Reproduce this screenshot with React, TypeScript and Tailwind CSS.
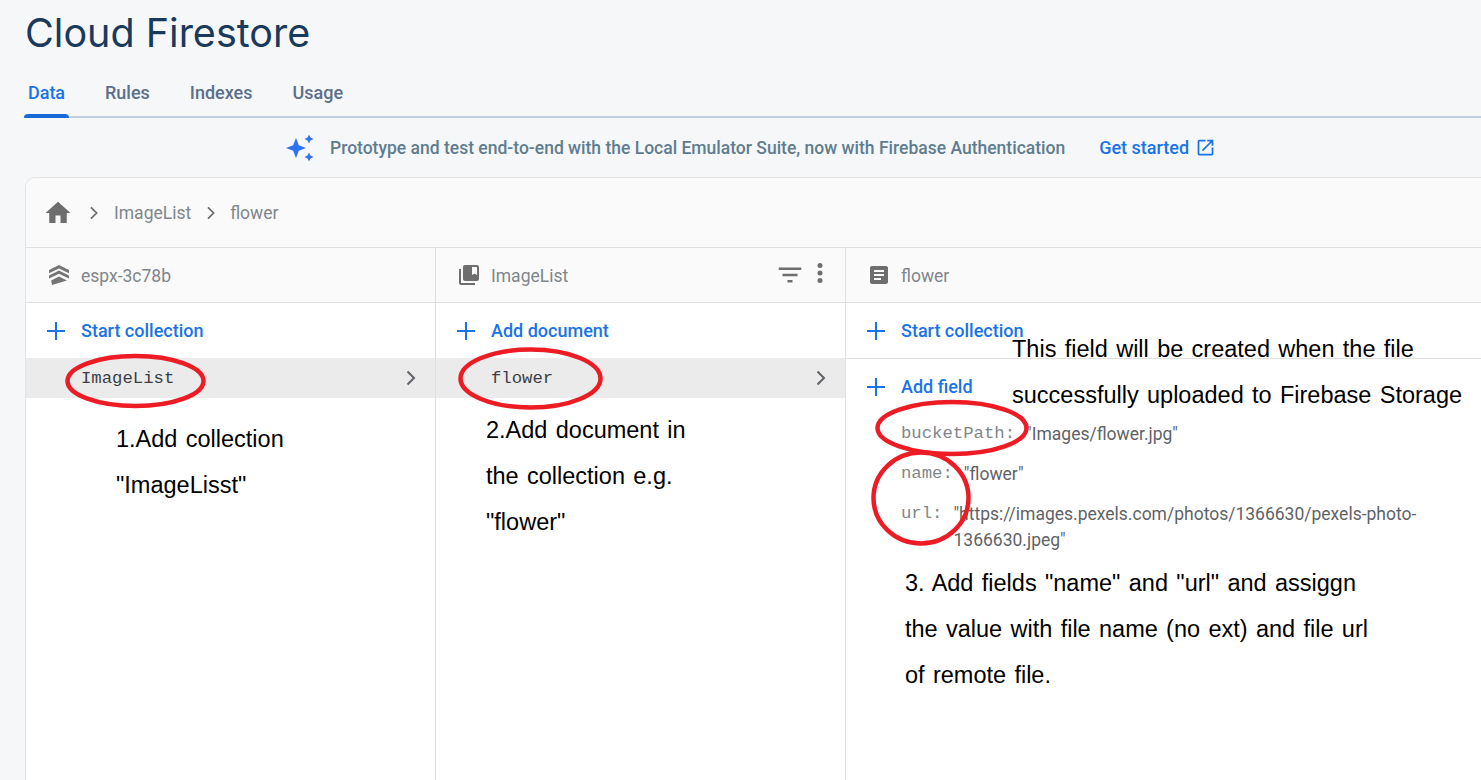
const sans = "font-['Roboto',sans-serif]";

function Plus() {
  return (
    <svg viewBox="0 0 18 18" className="w-[18px] h-[18px] shrink-0 text-[#1a73e8]" fill="currentColor">
      <path d="M8 0h2v8h8v2h-8v8H8v-8H0V8h8z" />
    </svg>
  );
}

function Chevron({ className }: { className: string }) {
  return (
    <svg viewBox="0 0 10 16" className={className} fill="none" stroke="currentColor" strokeWidth="2">
      <path d="M1.500 1.500 8 8l-6.500 6.500" />
    </svg>
  );
}

function ActionRow({ label, border }: { label: string; border?: boolean }) {
  return (
    <div className={`flex items-center h-[55px] pl-[21px] gap-[16px] ${border ? "border-b border-[#e0e0e0] h-[56px]" : ""}`}>
      <Plus />
      <span className="text-[18px] font-medium text-[#1a73e8]">{label}</span>
    </div>
  );
}

function SelectedRow({ label }: { label: string }) {
  return (
    <div className="flex items-center justify-between h-[40px] pl-[55px] pr-[19px] bg-[#ebebeb]">
      <span className="pt-[2px] font-['Liberation_Mono',monospace] text-[17.300px] text-[#3c4043]">{label}</span>
      <Chevron className="w-[10px] h-[16px] text-[#5f6368]" />
    </div>
  );
}

function Field({ name, value, wrap }: { name: string; value: string; wrap?: boolean }) {
  return (
    <div className={`flex pl-[55px] gap-[11px] text-[17.500px] leading-[26px] ${wrap ? "pr-[50px]" : ""}`}>
      <span className="font-['Liberation_Mono',monospace] text-[17.300px] text-[#80868b] shrink-0">{name}</span>
      <span className="text-[#5f6368]">{value}</span>
    </div>
  );
}

function ColumnHeader({ icon, label, children }: { icon: React.ReactNode; label: string; children?: React.ReactNode }) {
  return (
    <div className="flex items-center h-[55px] pl-[21px] pr-[10px] bg-[#fafafa] border-b border-[#e0e0e0]">
      <div className="w-[24px] flex justify-center shrink-0">{icon}</div>
      <span className="ml-[10px] pt-[2px] text-[17.500px] text-[#80868b]">{label}</span>
      {children}
    </div>
  );
}

function Note({ className, lines }: { className: string; lines: string[] }) {
  return (
    <div className={`absolute font-['Liberation_Sans',sans-serif] text-[23.500px] leading-[46px] [word-spacing:1.800px] text-black whitespace-nowrap ${className}`}>
      {lines.map((l) => (
        <div key={l}>{l}</div>
      ))}
    </div>
  );
}

export default function App() {
  return (
    <div className={`relative w-[1481px] h-[780px] overflow-hidden bg-[#f6f7f9] ${sans}`}>
      <h1 className="pl-[25px] pt-[9px] h-[74px] font-['Inter',sans-serif] text-[39.500px] leading-[48px] text-[#1a3a5c]">
        Cloud Firestore
      </h1>

      {/* tabs */}
      <div className="flex ml-[24px] h-[44px] border-b-[2px] border-[#c2cfe0] text-[18px] font-medium text-[#5c6f8a]">
        <div className="relative w-[45px] text-center text-[#1a73e8] pt-[5px]">
          Data
          <div className="absolute left-0 right-0 bottom-[-2px] h-[4px] rounded-t-[4px] bg-[#1a67d8]" />
        </div>
        <div className="ml-[36px] pt-[5px]">Rules</div>
        <div className="ml-[40px] pt-[5px]">Indexes</div>
        <div className="ml-[40px] pt-[5px]">Usage</div>
      </div>

      {/* banner */}
      <div className="flex items-center h-[59px] pl-[285px] text-[17.500px] font-medium">
        <svg viewBox="0 0 30 30" className="w-[30px] h-[30px] text-[#2b73f0]" fill="currentColor">
          <path d="M11 5 13.800 12.200 21 15 13.800 17.800 11 25 8.200 17.800 1 15 8.200 12.200z" />
          <path d="M24 1.500 25.400 4.600 28.500 6 25.400 7.400 24 10.500 22.600 7.400 19.500 6 22.600 4.600z" />
          <path d="M24 19.500 25.400 22.600 28.500 24 25.400 25.400 24 28.500 22.600 25.400 19.500 24 22.600 22.600z" />
        </svg>
        <span className="ml-[15px] pt-[2px] text-[#5f7d8f]">
          Prototype and test end-to-end with the Local Emulator Suite, now with Firebase Authentication
        </span>
        <span className="ml-[34px] text-[18px] text-[#1a73e8]">Get started</span>
        <svg viewBox="0 0 24 24" className="ml-[6px] w-[21px] h-[21px] text-[#1a73e8]" fill="currentColor">
          <path d="M19 19H5V5h7V3H5a2 2 0 0 0-2 2v14a2 2 0 0 0 2 2h14c1.100 0 2-.9 2-2v-7h-2v7zM14 3v2h3.590l-9.830 9.830 1.410 1.410L19 6.410V10h2V3h-7z" />
        </svg>
      </div>

      {/* data card */}
      <div className="ml-[25px] w-[1500px] h-[620px] bg-white rounded-tl-[10px] border-l border-t border-[#e3e4e6]">
        <div className="flex items-center h-[70px] pl-[20px] bg-[#fafafa] rounded-tl-[10px] border-b border-[#e0e0e0] text-[17.500px] text-[#80868b]">
          <svg viewBox="0 0 24 24" className="w-[30px] h-[30px] -ml-[3px] text-[#6e6e6e]" fill="currentColor">
            <path d="M10 20v-6h4v6h5v-8h3L12 3 2 12h3v8z" />
          </svg>
          <Chevron className="ml-[16px] w-[10px] h-[14px] text-[#6e6e6e]" />
          <span className="ml-[15px] pt-[2px]">ImageList</span>
          <Chevron className="ml-[15px] w-[10px] h-[14px] text-[#6e6e6e]" />
          <span className="ml-[14px] pt-[2px]">flower</span>
        </div>

        <div className="flex h-[550px]">
          <div className="w-[410px] shrink-0 border-r border-[#e0e0e0]">
            <ColumnHeader
              label="espx-3c78b"
              icon={
                <svg viewBox="0 0 20 20" className="w-[20px] h-[20px] text-[#757575]" fill="currentColor">
                  <path d="M10 0 20 5v3.200L10 3.400 0 8.200V5z" />
                  <path d="M10 5.400 20 10.400v3.200L10 8.800 0 13.600v-3.200z" />
                  <path d="M18 15.500 3 20l-.8-4.500L10 11.500z" />
                </svg>
              }
            />
            <ActionRow label="Start collection" />
            <SelectedRow label="ImageList" />
          </div>

          <div className="w-[410px] shrink-0 border-r border-[#e0e0e0]">
            <ColumnHeader
              label="ImageList"
              icon={
                <svg viewBox="0 0 24 24" className="w-[26px] h-[26px] text-[#6e6e6e]" fill="currentColor">
                  <path d="M4 6H2v14c0 1.100.9 2 2 2h14v-2H4V6zM20 2H8c-1.100 0-2 .9-2 2v12c0 1.100.9 2 2 2h12c1.100 0 2-.9 2-2V4c0-1.100-.9-2-2-2zm0 10-2.500-1.500L15 12V4h5v8z" />
                </svg>
              }
            >
              <svg viewBox="0 0 24 24" className="ml-auto w-[30px] h-[30px] text-[#6e6e6e]" fill="currentColor">
                <path d="M10 18h4v-2h-4v2zM3 6v2h18V6H3zm3 7h12v-2H6v2z" />
              </svg>
              <svg viewBox="0 0 24 24" className="mb-[4px] w-[30px] h-[30px] text-[#6e6e6e]" fill="currentColor">
                <path d="M12 8a2 2 0 1 0 0-4 2 2 0 0 0 0 4zm0 2a2 2 0 1 0 0 4 2 2 0 0 0 0-4zm0 6a2 2 0 1 0 0 4 2 2 0 0 0 0-4z" />
              </svg>
            </ColumnHeader>
            <ActionRow label="Add document" />
            <SelectedRow label="flower" />
          </div>

          <div className="flex-1">
            <ColumnHeader
              label="flower"
              icon={
                <svg viewBox="0 0 24 24" className="w-[24px] h-[24px] text-[#6e6e6e]" fill="currentColor">
                  <path d="M19 3H5c-1.100 0-2 .9-2 2v14c0 1.100.9 2 2 2h14c1.100 0 2-.9 2-2V5c0-1.100-.9-2-2-2zm-5 14H7v-2h7v2zm3-4H7v-2h10v2zm0-4H7V7h10v2z" />
                </svg>
              }
            />
            <ActionRow label="Start collection" border />
            <ActionRow label="Add field" />
            <div className="w-[635px] flex flex-col gap-[14px] pt-[7px]">
              <Field name="bucketPath:" value={'"Images/flower.jpg"'} />
              <Field name="name:" value={'"flower"'} />
              <Field name="url:" value={'"https://images.pexels.com/photos/1366630/pexels-photo-1366630.jpeg"'} wrap />
            </div>
          </div>
        </div>
      </div>

      {/* hand-drawn annotations on top of the screenshot */}
      <svg className="absolute inset-0 w-[1481px] h-[780px] pointer-events-none" fill="none" stroke="#ed1c24" strokeWidth="4.500">
        <ellipse cx="135.500" cy="381" rx="68" ry="25" />
        <ellipse cx="530.500" cy="378.500" rx="70" ry="29" />
        <ellipse cx="952" cy="428" rx="74.500" ry="26" />
        <ellipse cx="921" cy="498" rx="47.500" ry="45.500" />
      </svg>
      <Note className="left-[116px] top-[416px]" lines={["1.Add collection", '"ImageLisst"']} />
      <Note className="left-[486px] top-[407px]" lines={["2.Add document in", "the collection e.g.", '"flower"']} />
      <Note className="left-[1012px] top-[326px]" lines={["This field will be created when the file", "successfully uploaded to Firebase Storage"]} />
      <Note className="left-[905px] top-[560px]" lines={['3. Add fields "name" and "url" and assiggn', "the value with file name (no ext) and file url", "of remote file."]} />
    </div>
  );
}
